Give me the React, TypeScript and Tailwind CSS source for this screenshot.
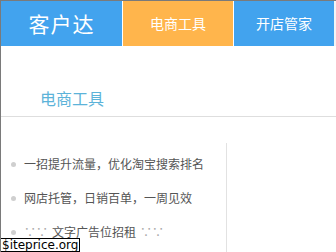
const items = [
  { text: '一招提升流量，优化淘宝搜索排名' },
  { text: '网店托管，日销百单，一周见效' },
  { text: '文字广告位招租', dots: true },
];

export default function App() {
  return (
    <div
      className="relative w-[336px] h-[252px] overflow-hidden bg-white border-t border-l border-[#7a7a7a]"
      style={{ fontFamily: '"Noto Sans CJK SC", "Noto Sans", sans-serif' }}
    >
      {/* Nav bar */}
      <div className="flex h-[45px]">
        <div className="w-[121px] bg-[#42a3ee] flex items-center justify-center text-white text-[21px] tracking-[1px]">
          客户达
        </div>
        <div className="w-px bg-white" />
        <div className="w-[110px] bg-[#ffb54c] flex items-center justify-center text-white text-[14px]">
          电商工具
        </div>
        <div className="w-px bg-white" />
        <div className="w-[100px] bg-[#42a3ee] flex items-center justify-center text-white text-[14px]">
          开店管家
        </div>
        <div className="flex-1 bg-[#f4f4f4]" />
      </div>

      {/* Section title */}
      <div className="h-[71px] border-b border-[#dedede] flex items-end pb-[6px] pl-[39px]">
        <span className="text-[16px] text-[#5cb3d9]">电商工具</span>
      </div>

      {/* List */}
      <div className="pt-[26px]">
        <div className="w-[226px] border-r border-[#e2e2e2] h-[120px]">
          <ul className="pt-[15px] flex flex-col gap-[22px]">
            {items.map((it) => (
              <li key={it.text} className="flex items-center h-[12px] pl-[10px]">
                <span className="w-[5px] h-[5px] rounded-full bg-[#cfcfcf] mr-[8px]" />
                {it.dots && <span className="text-[12px] text-[#aaa] mr-[4px]">∵∵</span>}
                <span className="text-[12px] text-[#555] whitespace-nowrap">{it.text}</span>
                {it.dots && <span className="text-[12px] text-[#aaa] ml-[4px]">∵∵</span>}
              </li>
            ))}
          </ul>
        </div>
      </div>

      <div
        className="absolute left-[-1px] bottom-0 bg-white border border-black px-[1px] text-[12px] leading-[12px] text-black"
        style={{ fontFamily: '"DejaVu Sans", sans-serif' }}
      >
        $iteprice.org
      </div>
    </div>
  );
}
